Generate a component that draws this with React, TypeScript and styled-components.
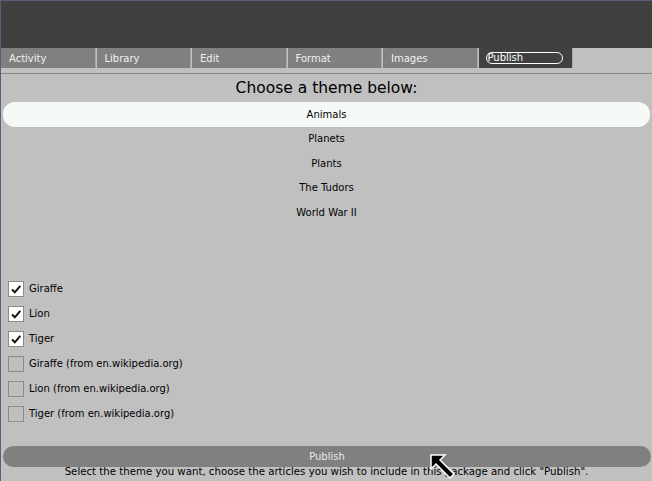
import React from "react";
import styled, { createGlobalStyle } from "styled-components";

const GlobalStyle = createGlobalStyle`
    html, body {
        margin: 0;
        padding: 0;
        background: #c0c0c0;
    }
    body {
        font-family: "DejaVu Sans", "Liberation Sans", sans-serif;
    }
`;

const Frame = styled.div`
    position: relative;
    width: 651px;
    height: 480px;
    border-left: 1px solid #5e5c7e;
    border-top: 1px solid #5e5c7e;
    background: #c0c0c0;
    overflow: hidden;
    display: flex;
    flex-direction: column;
`;

const TopBar = styled.div`
    height: 47px;
    background: #404040;
    flex-shrink: 0;
`;

const TabBar = styled.div`
    display: flex;
    height: 20px;
    flex-shrink: 0;
`;

const Tab = styled.div<{ $active?: boolean }>`
    width: 94.5px;
    margin-right: 1px;
    padding-left: 8px;
    box-sizing: border-box;
    display: flex;
    align-items: center;
    font-size: 10px;
    color: #f0f0f0;
    background: ${(p) => (p.$active ? "#404040" : "#808080")};
    border-right: 1px solid #a8a8a8;
`;

const ActivePill = styled.span`
    display: inline-block;
    width: 74px;
    height: 10px;
    line-height: 10px;
    border: 1.5px solid #ffffff;
    border-radius: 6px;
    color: #ffffff;
    font-size: 10px;
    padding-left: 1px;
    margin-left: -1px;
`;

const Rule = styled.div`
    height: 1px;
    margin-top: 5px;
    background: #888888;
    flex-shrink: 0;
`;

const Heading = styled.div`
    text-align: center;
    font-size: 15.5px;
    color: #000;
    height: 28px;
    line-height: 28px;
`;

const ThemeList = styled.div`
    display: flex;
    flex-direction: column;
    height: 174px;
`;

const ThemeItem = styled.div<{ $selected?: boolean }>`
    height: 24.5px;
    margin: 0 2px;
    display: flex;
    align-items: center;
    justify-content: center;
    font-size: 10px;
    color: #000;
    border-radius: 12px;
    background: ${(p) => (p.$selected ? "#f6faf6" : "transparent")};
`;

const CheckList = styled.div`
    display: flex;
    flex-direction: column;
    padding-left: 7px;
`;

const CheckRow = styled.label`
    height: 25px;
    display: flex;
    align-items: center;
    gap: 5px;
    font-size: 10px;
    color: #000;
`;

const Box = styled.span<{ $checked?: boolean }>`
    width: 14px;
    height: 14px;
    border: 1px solid #8a8a8a;
    background: ${(p) => (p.$checked ? "#ffffff" : "#c0c0c0")};
    display: flex;
    align-items: center;
    justify-content: center;
`;

const Spacer = styled.div`
    flex: 1;
`;

const PublishButton = styled.div`
    height: 21px;
    margin: 0 1px 0 2px;
    border-radius: 11px;
    background: #808080;
    color: #e8e8e8;
    font-size: 10px;
    display: flex;
    align-items: center;
    justify-content: center;
    flex-shrink: 0;
`;

const Status = styled.div`
    height: 14px;
    text-align: center;
    font-size: 10.2px;
    line-height: 10px;
    color: #000;
    white-space: nowrap;
    flex-shrink: 0;
`;

const Cursor = styled.svg`
    position: absolute;
    left: 428px;
    top: 452px;
`;

const tabs = ["Activity", "Library", "Edit", "Format", "Images"];
const themes = ["Animals", "Planets", "Plants", "The Tudors", "World War II"];
const articles = [
    { name: "Giraffe", checked: true },
    { name: "Lion", checked: true },
    { name: "Tiger", checked: true },
    { name: "Giraffe (from en.wikipedia.org)", checked: false },
    { name: "Lion (from en.wikipedia.org)", checked: false },
    { name: "Tiger (from en.wikipedia.org)", checked: false },
];

function Tick(): JSX.Element {
    return (
        <svg width="12" height="12" viewBox="0 0 12 12">
            <path d="M2 6.5 L4.8 9.3 L10.3 2.8" fill="none" stroke="#111" strokeWidth="2" />
        </svg>
    );
}

export default function App(): JSX.Element {
    return (
        <Frame>
            <GlobalStyle />
            <TopBar />
            <TabBar>
                {tabs.map((t) => (
                    <Tab key={t}>{t}</Tab>
                ))}
                <Tab $active>
                    <ActivePill>Publish</ActivePill>
                </Tab>
            </TabBar>
            <Rule />
            <Heading>Choose a theme below:</Heading>
            <ThemeList>
                {themes.map((t, i) => (
                    <ThemeItem key={t} $selected={i === 0}>
                        {t}
                    </ThemeItem>
                ))}
            </ThemeList>
            <CheckList>
                {articles.map((a) => (
                    <CheckRow key={a.name}>
                        <Box $checked={a.checked}>{a.checked && <Tick />}</Box>
                        {a.name}
                    </CheckRow>
                ))}
            </CheckList>
            <Spacer />
            <PublishButton>Publish</PublishButton>
            <Status>
                Select the theme you want, choose the articles you wish to include in this package and click "Publish".
            </Status>
            <Cursor width="30" height="30" viewBox="0 0 30 30">
                <path
                    d="M2 2 L16 2 L11 7 L25 21 L21 25 L7 11 L2 16 Z"
                    fill="#000"
                    stroke="#fff"
                    strokeWidth="1.5"
                />
            </Cursor>
        </Frame>
    );
}
